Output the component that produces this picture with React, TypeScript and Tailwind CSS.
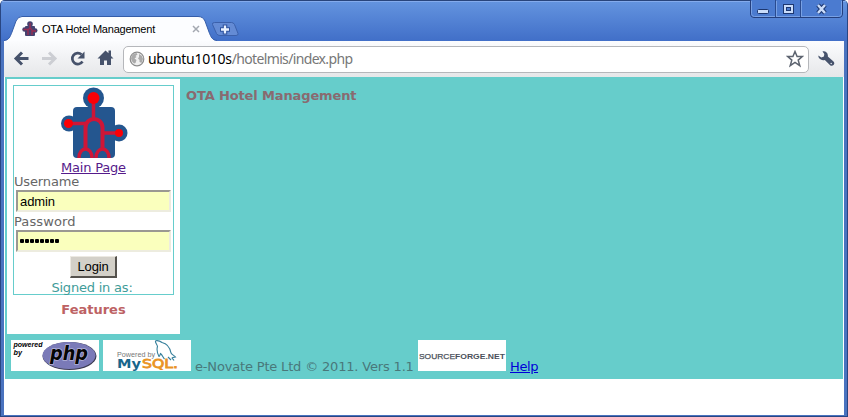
import React from 'react';

const ui = "font-['Liberation_Sans',Arial,sans-serif]";
const body = "font-['DejaVu_Sans',Verdana,sans-serif]";

function PuzzleLogo() {
  return (
    <svg width="68" height="72" viewBox="0 0 68 72" className="block">
      <g fill="#24568f">
        <rect x="12" y="20" width="42" height="51" rx="4" />
        <circle cx="32.500" cy="11" r="10.500" />
        <circle cx="8" cy="36.500" r="8" />
        <circle cx="58" cy="46" r="8.500" />
        <path d="M28 18h10v6H28zM8 32h8v9H8zM50 41h8v10h-8z" />
      </g>
      <g fill="none" stroke="#cf1637" strokeWidth="4">
        <path d="M32.500 11v20M8 36.500h17M58 46H41" strokeWidth="3.500" />
        <path d="M24.500 62V41c0-12 17-12 17 0v21" />
        <path d="M18 71c0-12 13-12 13 0M35 71c0-12 13-12 13 0" strokeWidth="3.500" />
      </g>
      <g fill="#fb0006">
        <circle cx="32.500" cy="11" r="6" />
        <circle cx="7.500" cy="36.500" r="4.500" />
        <circle cx="58" cy="46" r="4" />
      </g>
    </svg>
  );
}

function TabFavicon() {
  return (
    <svg width="16" height="16" viewBox="0 0 16 16" className="block shrink-0">
      <g fill="#44416f">
        <rect x="3" y="5" width="10" height="10" rx="1" />
        <circle cx="8" cy="3" r="2.800" />
        <circle cx="2.500" cy="8.500" r="2.200" />
        <circle cx="13.300" cy="9.500" r="2.200" />
      </g>
      <path d="M8 2v5M1.500 8.500h5M14 10h-4M6 14V9q2-3 4 0v5" fill="none" stroke="#9c2b50" strokeWidth="1.300" />
    </svg>
  );
}

function WindowButtons() {
  return (
    <svg width="94" height="19" viewBox="0 0 94 19" className="ml-auto mr-[3px] block self-start">
      <path d="M.5 0v14q0 3.500 3.500 3.500h85q3.500 0 3.500-3.500V0" fill="#4b7bd0" stroke="#243f7e" />
      <path d="M1.500 1v12.500q0 3 3 3h84q3 0 3-3V1" fill="none" stroke="#79a1e4" />
      <path d="M25.500 0v17M50.500 0v17" stroke="#2a4b8f" />
      <path d="M26.500 1v16M51.500 1v16" stroke="#79a1e4" />
      <rect x="7.500" y="9.500" width="11" height="4" rx="1" fill="#c9dcfa" stroke="#1d3770" />
      <rect x="33.500" y="4.500" width="10" height="9" fill="#c9dcfa" stroke="#1d3770" />
      <rect x="36.500" y="7.500" width="4" height="3" fill="#4b7bd0" stroke="#1d3770" />
      <path d="M68 5l7 8M75 5l-7 8" stroke="#1d3770" strokeWidth="4.500" />
      <path d="M68 5l7 8M75 5l-7 8" stroke="#c9dcfa" strokeWidth="2.500" />
    </svg>
  );
}

function TabStrip() {
  return (
    <div className="flex h-[41px] items-end bg-gradient-to-b from-[#6595e0] to-[#416fc8] shadow-[inset_0_1px_0_#28447c,inset_0_2px_0_#84abed]">
      <div className="relative ml-[3px] h-[25px] w-[213px] shrink-0">
        <svg width="213" height="25" viewBox="0 0 213 25" className="absolute inset-0">
          <path d="M0 25C5 24 6 21 8 16l4-11q2-4.500 6-4.500h176q5 0 7 4.500l4 11c2 5 3 8 8 9z" fill="#fcfdff" />
          <path d="M0 24.500C5 24 6 21 8 16l4-11q2-4.500 6-4.500h176q5 0 7 4.500l4 11c2 5 3 8 8 8.500" fill="none" stroke="#355da9" />
        </svg>
        <div className="relative flex h-[25px] items-center pl-[18px]">
          <TabFavicon />
          <span className={`${ui} ml-1 mt-px w-[150px] whitespace-nowrap text-[11px] leading-none tracking-[-0.21px] text-black`}>OTA Hotel Management</span>
          <svg width="8" height="8" viewBox="0 0 8 8"><path d="M1 1l6 6M7 1L1 7" stroke="#a4a9b1" strokeWidth="1.500" /></svg>
        </div>
      </div>
      <svg width="28" height="17" viewBox="0 0 28 17" className="-ml-[6px] mb-[3px] block">
        <path d="M1.500 3.500Q1 1.500 3.500 1.500h17q2 0 3 2l3.500 9q.5 2-2 2H9q-2.500 0-3.500-2z" fill="#648bd5" stroke="#3b60ab" />
        <path d="M14 3.500v10M9 8.500h10" stroke="#2e539e" strokeWidth="4.500" />
        <path d="M14 4.500v8M10 8.500h8" stroke="#e9f1ff" strokeWidth="2.300" />
      </svg>
      <WindowButtons />
    </div>
  );
}

function Toolbar() {
  return (
    <div className="flex h-9 items-center bg-gradient-to-b from-[#fbfcfe] to-[#e6e7e9]">
      <svg width="119" height="36" viewBox="0 0 119 36" className="block shrink-0">
        <path d="M24.500 17.500H13M18 11.500l-6 6 6 6" fill="none" stroke="#46526b" strokeWidth="3" />
        <path d="M38 17.500h12M45 11.500l6 6-6 6" fill="none" stroke="#ccced3" strokeWidth="3" />
        <path d="M78.500 20.500A5.500 5.500 0 1 1 77.500 13.500" fill="none" stroke="#46526b" strokeWidth="2.700" />
        <path d="M80.500 10.500v7H73.500z" fill="#46526b" />
        <path d="M101.500 9.500L93.500 17.500h2.500V24h4v-4.500h3V24h4v-6.500h2.500l-2.500-2.500V9.500h-2.500v2.800z" fill="#46526b" />
      </svg>
      <div className="flex h-[27px] w-[686px] items-center rounded-[5px] border border-[#b5b7bb] bg-white pl-[5px]">
        <svg width="16" height="16" viewBox="0 0 16 16" className="shrink-0">
          <circle cx="8" cy="8" r="6.800" fill="#f0f0f0" stroke="#8d8d8d" strokeWidth="1.200" />
          <path d="M2.500 5q2-3 5-3l1 1.500-2 1.500 1 1-2 1.500 2 1.500-1 3-1.500.5Q2 10 2 7.500zM10 3l3 2 1 3-1.500 4-2-1V9L9 7.500l1-1.500z" fill="#aaa" />
        </svg>
        <span className="ml-[3px] whitespace-nowrap font-['Noto_Sans','DejaVu_Sans',sans-serif] text-[14px] leading-none tracking-[-0.65px] text-[#777]"><span className="tracking-[-0.3px] text-black">ubuntu1010s</span>/hotelmis/index.php</span>
        <svg width="18" height="18" viewBox="0 0 18 18" className="ml-auto mr-[4px]">
          <path d="M9 1.500l2.100 5h5.200l-4.100 3.600 1.600 5.600L9 12.400l-4.800 3.300 1.600-5.600L1.700 6.500h5.200z" fill="#fff" stroke="#5d6470" strokeWidth="1.500" />
        </svg>
      </div>
      <svg width="18" height="18" viewBox="0 0 18 18" className="ml-[8px] block">
        <path d="M5.500 1.500C8.500.7 11.500 3.300 10.800 6.600l5.700 4.900c2.300 2.300-.8 5.700-3.400 3.800L7.800 9.900C4.800 11 1.400 9 1.300 5.600l3 2 2.600-1 .4-2.700z" fill="#46526b" />
        <circle cx="14.200" cy="13.500" r=".8" fill="#dfe2e8" />
      </svg>
    </div>
  );
}

const field = "ml-[2px] flex h-[22px] w-[155px] items-center border-2 border-b-[#edecdf] border-l-[#9a9892] border-r-[#edecdf] border-t-[#9a9892] bg-[#faffbd] pl-[2px]";

function LoginPanel() {
  return (
    <aside className="h-[255px] w-[173px] shrink-0 bg-white px-[6px] pt-[6px]">
      <div className="flex h-[210px] w-[161px] flex-col border border-[#66cdcc]">
        <div className="ml-[47px] mt-px"><PuzzleLogo /></div>
        <a className="h-[15px] self-center whitespace-nowrap text-[13px] leading-[17px] tracking-[-0.2px] text-[#551a8b] underline underline-offset-1">Main Page</a>
        <label className="h-[16px] text-[13px] leading-[16px] tracking-[-0.15px]">Username</label>
        <div className={field}><span className={`${ui} text-[13px] leading-none tracking-[-0.1px] text-black`}>admin</span></div>
        <label className="h-[18px] text-[13px] leading-[19px] tracking-[0.1px]">Password</label>
        <div className={`${field} gap-px`}>
          {Array.from({ length: 8 }, (_, i) => <i key={i} className="size-1 rounded-[1px] bg-black" />)}
        </div>
        <button className={`${ui} mt-[4px] h-[22px] w-[47px] self-center border border-b-2 border-r-2 border-b-[#55524d] border-l-[#ece9e2] border-r-[#55524d] border-t-[#ece9e2] bg-[#d3d0c8] text-[13px] leading-[19px] tracking-[-0.15px] text-black`}>Login</button>
        <div className="mt-[3px] h-[13px] self-center whitespace-nowrap pr-[3px] text-[13px] leading-[13px] tracking-[-0.2px] text-[#3f9c99]">Signed in as:</div>
      </div>
      <div className="mt-[6px] text-center text-[13px] font-bold leading-[17px] text-[#bd6264]">Features</div>
    </aside>
  );
}

function PhpBadge() {
  return (
    <svg width="88" height="31" viewBox="0 0 88 31" className="block bg-white">
      <g className={ui} fontStyle="italic" fontWeight="bold" fontSize="7">
        <text x="2.500" y="7" textLength="29" lengthAdjust="spacingAndGlyphs">powered</text>
        <text x="2.500" y="15" textLength="8.500" lengthAdjust="spacingAndGlyphs">by</text>
      </g>
      <ellipse cx="58.500" cy="16" rx="27" ry="14" fill="#3b3b50" />
      <ellipse cx="58" cy="15.500" rx="26.500" ry="13.500" fill="#7a7ab8" />
      <text x="39" y="20" fontSize="19" fontStyle="italic" fontWeight="bold" textLength="38" lengthAdjust="spacingAndGlyphs" stroke="#b4b4da" strokeWidth="1.500" paintOrder="stroke" fill="#050505" className={body}>php</text>
    </svg>
  );
}

function MySqlBadge() {
  return (
    <svg width="88" height="31" viewBox="0 0 88 31" className="block bg-white">
      <text x="14" y="17" fontSize="6.500" textLength="38" lengthAdjust="spacingAndGlyphs" fill="#777" className={ui}>Powered by</text>
      <path d="M52.500.8c3-.6 5 .5 6.500 1.700 5 1 8 5.500 9 10.500 1 2 3.500 2.500 4.500 4-2 .3-3 .3-3.500 1 .7 1 1.500 1.500 2 2.500M52.500.8c-.5 2 1.500 3.500 2 5.700-1 3 0 7 1.500 10 1 0 1-2 1.500-3 2 1.500 2.500 4 4 5.500M65 17l3 3" fill="none" stroke="#367f9b" strokeWidth="1.100" />
      <g fontSize="13" className={body}>
        <text x="14" y="27.800" textLength="24" lengthAdjust="spacingAndGlyphs" fontWeight="bold" fill="#18668c">My</text>
        <text x="39" y="27.800" textLength="36" lengthAdjust="spacingAndGlyphs" stroke="#e99424" strokeWidth=".8" fill="#e99424">SQL.</text>
      </g>
    </svg>
  );
}

function SourceForgeBadge() {
  return (
    <svg width="88" height="31" viewBox="0 0 88 31" className="block bg-white">
      <g fontSize="8" fill="#4b505a" className={ui}>
        <text x="1" y="19" textLength="36" lengthAdjust="spacingAndGlyphs" stroke="#4b505a" strokeWidth=".25">SOURCE</text>
        <text x="37" y="19" textLength="50" lengthAdjust="spacingAndGlyphs" fontWeight="bold">FORGE.NET</text>
      </g>
    </svg>
  );
}

export default function App() {
  return (
    <div className="h-[417px] w-[848px] overflow-hidden rounded-t-[5px] border-x border-b border-[#294682] bg-[#4a73bf]">
      <TabStrip />
      <div className="mx-[3px] h-[374px] bg-white">
        <Toolbar />
        <div className={`${body} mx-px h-[302px] bg-[#66cdcb] pl-[2px] pt-[2px] text-[13px] text-[#666]`}>
          <main className="flex">
            <LoginPanel />
            <h1 className="ml-[6px] mt-[9px] whitespace-nowrap text-[13px] font-bold leading-[16px] tracking-[-0.13px] text-[#896a70]">OTA Hotel Management</h1>
          </main>
          <footer className="ml-[4px] mt-[6px] flex items-start gap-1 leading-[16px]">
            <PhpBadge />
            <MySqlBadge />
            <span className="mt-[19px] w-[219px] whitespace-nowrap tracking-[-0.17px] text-[#49787a]">e-Novate Pte Ltd © 2011. Vers 1.1</span>
            <SourceForgeBadge />
            <a className="mt-[19px] tracking-[-0.4px] text-[#0000d8] underline underline-offset-1">Help</a>
          </footer>
        </div>
      </div>
    </div>
  );
}
